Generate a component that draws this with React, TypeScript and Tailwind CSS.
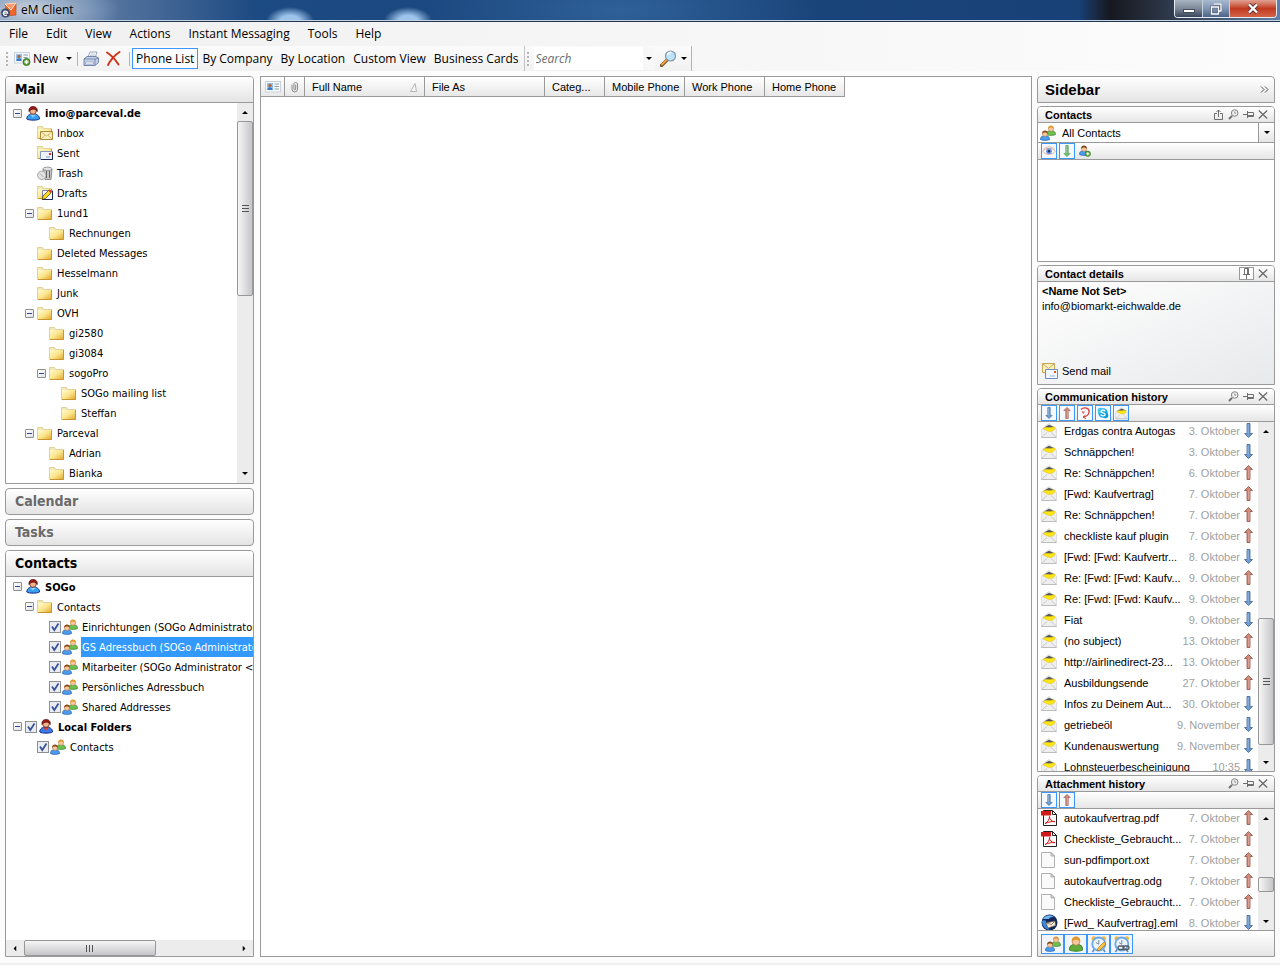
import { useState } from 'react';
import type { ReactNode } from 'react';

type IconProps = { className?: string };

/* ---------- icons ---------- */

const LogoIcon = () => (
  <svg width="16" height="16" viewBox="0 0 16 16">
    <path d="M4 2L15 1v12l-9 1z" fill="#f0672c" stroke="#b9441a" strokeWidth=".6" />
    <path d="M4 2l6 6 5-7z" fill="#ff9a6a" stroke="#fff" strokeWidth=".7" />
    <circle cx="4.500" cy="11" r="4.500" fill="#3c4a6b" />
    <path d="M2.300 11.200h4.400a2.200 2.200 0 1 0-.8 1.800" fill="none" stroke="#fff" strokeWidth="1.200" />
  </svg>
);

const CardIcon = ({ className }: IconProps) => (
  <svg width="16" height="12" viewBox="0 0 16 12" className={className}>
    <rect x=".5" y=".5" width="15" height="10.500" fill="#f7fafd" stroke="#c9d1da" />
    <rect x="2" y="2" width="6" height="7" fill="#8fc1ee" />
    <circle cx="5" cy="4.500" r="1.700" fill="#b06a3c" />
    <path d="M2.500 9c0-2 1-2.800 2.500-2.800S7.500 7 7.500 9z" fill="#3a79c4" />
    <path d="M9.500 3h4.500M9.500 5.500h4.500M9.500 8h4.500" stroke="#8d9bab" />
  </svg>
);

const NewCardIcon = () => (
  <svg width="17" height="14" viewBox="0 0 17 14">
    <rect x=".5" y=".5" width="15" height="10.500" fill="#f7fafd" stroke="#c9d1da" />
    <rect x="2" y="2" width="6" height="7" fill="#8fc1ee" />
    <circle cx="5" cy="4.500" r="1.700" fill="#b06a3c" />
    <path d="M2.500 9c0-2 1-2.800 2.500-2.800S7.500 7 7.500 9z" fill="#3a79c4" />
    <path d="M9.500 3h4.500M9.500 5.500h4" stroke="#8d9bab" />
    <circle cx="12.500" cy="10" r="3.500" fill="#5ea73f" stroke="#39791f" />
    <path d="M12.500 8v4M10.500 10h4" stroke="#fff" strokeWidth="1.400" />
  </svg>
);

const PrinterIcon = () => (
  <svg width="16" height="16" viewBox="0 0 16 16">
    <path d="M5 6l2-5h7l-2 6z" fill="#fff" stroke="#7f8fa8" strokeWidth=".8" />
    <path d="M7.500 3h4.500M7 4.700h4.500" stroke="#9fb2cf" strokeWidth=".7" />
    <path d="M1 8l3-2.500h9L15.500 7v4.500L12 14.500H1z" fill="#c3d0e8" stroke="#5b6e95" strokeWidth=".8" />
    <path d="M1 8h11l3.500-1M12 8v6" stroke="#5b6e95" strokeWidth=".7" fill="none" />
    <path d="M2.500 11h8v2h-8z" fill="#fff" stroke="#8294b8" strokeWidth=".6" />
  </svg>
);

const DeleteIcon = () => (
  <svg width="15" height="15" viewBox="0 0 15 15">
    <path d="M1 1.500c4 2.500 8 6.500 11.500 12M13.500 1C9 4 5 8 2 14" fill="none" stroke="#cf3319" strokeWidth="1.900" strokeLinecap="round" />
  </svg>
);

const LensIcon = () => (
  <svg width="17" height="17" viewBox="0 0 17 17">
    <path d="M1.500 15.500l6-6" stroke="#6d5236" strokeWidth="3.200" strokeLinecap="round" />
    <path d="M2 14.500l5-5" stroke="#f5a331" strokeWidth="1.800" strokeLinecap="round" />
    <circle cx="10.500" cy="6" r="5" fill="#bfe3fa" stroke="#8095ab" strokeWidth="1.200" />
    <path d="M7.500 5a3.300 3.300 0 0 1 3.500-2.500" fill="none" stroke="#fff" strokeWidth="1.400" />
  </svg>
);

const FolderShape = () => (
  <>
    <defs>
      <linearGradient id="folder" x1="0" y1="0" x2="1" y2="1">
        <stop offset="0" stopColor="#fffad0" />
        <stop offset=".5" stopColor="#fbe58c" />
        <stop offset="1" stopColor="#e2a52c" />
      </linearGradient>
    </defs>
    <path d="M.5 13.500v-12h5l1 2h8v10z" fill="#f2e9b4" stroke="#dfd29a" />
    <path d="M1 4h13.500v9.500H1z" fill="url(#folder)" />
    <path d="M14.500 4v9.500H1" fill="none" stroke="#c9962d" />
  </>
);

const FolderIcon = () => (
  <svg width="16" height="15" viewBox="0 0 16 15">
    <FolderShape />
  </svg>
);

const InboxIcon = () => (
  <svg width="16" height="16" viewBox="0 0 16 16">
    <FolderShape />
    <path d="M3.500 6.500h12v8h-12z" fill="#fdf0bf" stroke="#b08c3c" />
    <path d="M4 7l5.500 4L15 7M4 14l4-3.700M15 14l-4-3.700" fill="none" stroke="#c9a552" strokeWidth=".8" />
  </svg>
);

const SentIcon = () => (
  <svg width="16" height="16" viewBox="0 0 16 16">
    <FolderShape />
    <path d="M3.500 6.500h12v8h-12z" fill="#eef2fd" stroke="#8796c6" />
    <path d="M15.500 7v7.500H4" fill="none" stroke="#1d2757" />
    <path d="M12 8h2v2h-2z" fill="#e02a1c" />
    <path d="M9 12h4" stroke="#a6b3df" strokeWidth="1.500" />
  </svg>
);

const TrashIcon = () => (
  <svg width="16" height="15" viewBox="0 0 16 15">
    <path d="M6 3h9l-1 10.500H8z" fill="#c6c6c6" stroke="#777" strokeWidth=".8" />
    <path d="M9.500 5v7M12.500 5v7" stroke="#5a5a5a" strokeWidth=".9" />
    <ellipse cx="10.500" cy="2.800" rx="4.500" ry="1.700" fill="#e6e6e6" stroke="#777" strokeWidth=".7" />
    <circle cx="4.800" cy="9.300" r="4.200" fill="#e3e3e3" stroke="#909090" strokeWidth=".8" />
    <path d="M3 7.500l3.500 3.500" stroke="#a8a8a8" />
  </svg>
);

const DraftsIcon = () => (
  <svg width="16" height="16" viewBox="0 0 16 16">
    <FolderShape />
    <path d="M5.500 5.500h10v9h-10z" fill="#f4f7ff" stroke="#7484b8" />
    <path d="M15.500 6v8.500H5.500" fill="none" stroke="#1d2757" />
    <path d="M5 14.500l1-3.500 5.500-5.500 2.500 2.500L8.500 13.500z" fill="#ffd91f" stroke="#3d3300" strokeWidth=".7" />
    <path d="M11.500 5.500l2.500 2.500 1.200-1.300-2.400-2.400z" fill="#e33a20" />
  </svg>
);

const AccountIcon = ({ red = false }: { red?: boolean }) => (
  <svg width="15" height="15" viewBox="0 0 15 15">
    <path d="M.8 13c0-3.500 2.500-5 6.200-5s6.500 1.500 6.500 5c-2 1.500-11 1.500-12.700 0z" fill={red ? '#3a7be8' : '#3aa0ee'} stroke="#112a86" />
    <path d="M4 8.500l3 3 3.200-3z" fill={red ? '#e5392a' : '#8ad4ff'} />
    <circle cx="7" cy="5" r="3.300" fill="#f3b38a" stroke="#5a1810" strokeWidth=".7" />
    <path d="M3 5.500C2.600 1.500 5 .5 7 .5s4.800 1 4.200 5c-1-2-2-2.300-3.700-2.300S4 3.500 3 5.500z" fill="#a81818" stroke="#3e0808" strokeWidth=".7" />
  </svg>
);

const PersonShape = ({ hair, body, edge }: { hair: string; body: string; edge: string }) => (
  <>
    <path d="M.5 9.500c0-3 1.700-3.800 4.500-3.800s4.500.8 4.500 3.800c-1.500 1.200-7.500 1.200-9 0z" fill={body} stroke={edge} strokeWidth=".7" />
    <circle cx="5" cy="3.800" r="2.600" fill="#f6c79b" stroke="#a3683a" strokeWidth=".4" />
    <path d="M2.100 4.200C1.800 1.300 3.500.4 5 .4s3.200.9 2.900 3.800C7 2.700 6 2.500 5 2.500s-2 .2-2.900 1.700z" fill={hair} />
  </>
);

const PeopleIcon = () => (
  <svg width="16" height="16" viewBox="0 0 16 16">
    <g transform="translate(6 0)">
      <PersonShape hair="#e0982a" body="#6cc04f" edge="#34832a" />
    </g>
    <g transform="translate(0 5)">
      <PersonShape hair="#8a4a1c" body="#4d9cec" edge="#1e5fb4" />
    </g>
  </svg>
);

const PersonIcon = () => (
  <svg width="16" height="16" viewBox="0 0 10 11">
    <PersonShape hair="#e0982a" body="#62ad3a" edge="#34832a" />
  </svg>
);

const AddPersonIcon = () => (
  <svg width="12" height="12" viewBox="0 0 12 12">
    <PersonShape hair="#7c4218" body="#4d9cec" edge="#1e5fb4" />
    <circle cx="8.800" cy="8.800" r="2.700" fill="#5ea73f" stroke="#2f6f1c" strokeWidth=".6" />
    <path d="M8.800 7.200v3.200M7.200 8.800h3.200" stroke="#fff" />
  </svg>
);

const EyeIcon = () => (
  <svg width="14" height="12" viewBox="0 0 14 12">
    <path d="M.8 6.500C3 2.500 10.500 2 13.200 6.500 10.500 10.200 3.500 10.200.8 6.500z" fill="#fff" stroke="#d9a58c" strokeWidth=".9" />
    <path d="M1 4.500C4 1 10 1 13 4.500" fill="none" stroke="#e8b9a3" />
    <circle cx="7" cy="6.200" r="2.900" fill="#6f9be0" />
    <circle cx="7" cy="6.200" r="1.200" fill="#1c2f5c" />
  </svg>
);

const arrowColors = {
  blue: ['#6f9bd1', '#3d6594'],
  red: ['#d08a7c', '#96503f'],
  green: ['#6cc067', '#4c9a4a'],
};

const ArrowIcon = ({ color, up = false, small = false }: { color: keyof typeof arrowColors; up?: boolean; small?: boolean }) => (
  <svg width={small ? 8 : 9} height={small ? 12 : 15} viewBox="0 0 9 15" className={up ? 'rotate-180' : ''}>
    <path d="M3 .5h3v10h2.500l-4 4-4-4H3z" fill={arrowColors[color][0]} stroke={arrowColors[color][1]} strokeWidth=".8" />
    <path d="M4 1.500v9" stroke="#fff" strokeOpacity=".4" strokeWidth=".9" />
  </svg>
);

const MissedCallIcon = () => (
  <svg width="12" height="12" viewBox="0 0 12 12">
    <path d="M2 2.500C5-.5 11 1 10 5.500 9.500 8.500 7 9.500 4.500 10" fill="none" stroke="#dc3a34" strokeWidth="1.300" />
    <path d="M6.500 8L4 10.200 7 11.500" fill="none" stroke="#dc3a34" />
    <path d="M3 4.500l2 2M5.500 4.500l-1 1" fill="none" stroke="#e46b62" strokeWidth="1.200" />
  </svg>
);

const SkypeIcon = () => (
  <svg width="12" height="12" viewBox="0 0 12 12">
    <circle cx="6" cy="6" r="4.800" fill="#18aee9" />
    <circle cx="3.500" cy="3.500" r="2.800" fill="#45c3f2" />
    <circle cx="8.500" cy="8.500" r="2.800" fill="#0f9bd8" />
    <path d="M8.200 4.200C7 2.600 3.900 3 4 4.600c.1 1.600 4.200 1 4.200 2.900 0 1.700-3.400 1.900-4.600.2" fill="none" stroke="#fff" strokeWidth="1.300" />
  </svg>
);

const MailItemIcon = ({ size = 16 }: { size?: number }) => (
  <svg width={size} height={size} viewBox="0 0 16 16">
    <path d="M.5 6L8 .5 15.500 6v8.500H.5z" fill="#efefef" stroke="#dedede" />
    <path d="M.5 14.500l5.500-5M15.500 14.500l-5.500-5" fill="none" stroke="#c9c9c9" />
    <path d="M.5 14.500h15" stroke="#bdbdbd" />
    <path d="M3 4.500L8 1.800l5.500 2.400L9 5z" fill="#55585c" />
    <path d="M1.800 5.800C4 3.800 8 5 13.800 4c.6 2-1.300 4.500-5 4.500-2.600 0-3.600-1.600-7-2.700z" fill="#ffe716" stroke="#d8b800" strokeWidth=".5" />
  </svg>
);

const SendMailIcon = () => (
  <svg width="16" height="16" viewBox="0 0 16 16">
    <path d="M.5.5h12v9H.5z" fill="#fdf0bf" stroke="#c9a552" />
    <path d="M1 1l5.500 4.500L12 1" fill="none" stroke="#c9a552" />
    <path d="M3.500 6.500h12v9h-12z" fill="#f2f6ff" stroke="#6b8cc7" />
    <path d="M12 8h2v2h-2z" fill="#e8551c" />
    <path d="M8 13h5" stroke="#9db5de" />
  </svg>
);

const PdfIcon = () => (
  <svg width="17" height="16" viewBox="0 0 17 16">
    <path d="M2.500.5h9l4 4v11h-13z" fill="#fff" stroke="#222" />
    <path d="M11.500.5v4h4" fill="none" stroke="#222" />
    <path d="M0 1h10v4.500H0z" fill="#d21a1a" />
    <path d="M4 13.500c2.500-1 4.500-4 4.500-7 0 3 2 5 5.500 5.200-3-.4-6.500.2-10 1.800z" fill="none" stroke="#d21a1a" />
  </svg>
);

const FileIcon = () => (
  <svg width="14" height="16" viewBox="0 0 14 16">
    <path d="M.5.5h9.500l3.500 3.500v11.500H.5z" fill="#fafafa" stroke="#b0b0b0" />
    <path d="M10 .5V4h3.500z" fill="#dcdcdc" stroke="#a0a0a0" strokeWidth=".8" />
  </svg>
);

const EmlIcon = () => (
  <svg width="17" height="17" viewBox="0 0 17 17">
    <circle cx="8.500" cy="8.500" r="8" fill="#14285a" />
    <path d="M2 5C4 1 10 0 13.500 3.500c-3-1-5 0-5.500 1.500z" fill="#6fb6f2" />
    <path d="M5 9L14 7l.5 4.500L7 14z" fill="#f6e9d4" stroke="#6a6250" strokeWidth=".6" />
    <path d="M5 9l5.500 1.500L14 7" fill="none" stroke="#6a6250" strokeWidth=".7" />
    <path d="M1 7c0 4.500 2.500 8 8 9C6 13.500 4.500 11 5 7 4 6 2 6 1 7z" fill="#3c8ade" />
  </svg>
);

const ClockIcon = ({ children }: { children?: ReactNode }) => (
  <svg width="18" height="18" viewBox="0 0 18 18">
    <circle cx="3.800" cy="3.600" r="2.300" fill="#f3b545" />
    <circle cx="13.800" cy="3.600" r="2.300" fill="#f3b545" />
    <path d="M4 14.500L2.500 17M13.500 14.500L15 17" stroke="#5488c6" strokeWidth="1.500" />
    <circle cx="8.800" cy="9" r="6.500" fill="#eef6fd" stroke="#6ba9e4" strokeWidth="1.800" />
    <path d="M8.800 5v4.300L6 7.500" fill="none" stroke="#7a8a9c" />
    {children}
  </svg>
);

const ClipIcon = () => (
  <svg width="8" height="12" viewBox="0 0 8 12">
    <path d="M1 3.500v4.700a2.700 2.700 0 0 0 5.500 0V2.800a1.900 1.900 0 0 0-3.600 0V8a.9.900 0 0 0 1.800 0V3.500" fill="none" stroke="#8a8a8a" />
  </svg>
);

const ShareGlyph = () => (
  <svg width="10" height="12" viewBox="0 0 10 12">
    <path d="M3 4.500H.5v6h8v-6H6M4.500 8V1M2.500 3l2-2 2 2" fill="none" stroke="#6f6f6f" />
  </svg>
);

const SearchGlyph = () => (
  <svg width="11" height="11" viewBox="0 0 11 11">
    <circle cx="6.700" cy="4" r="3.300" fill="#ececec" stroke="#858585" />
    <path d="M6.700 2.500v1.700h1.500" fill="none" stroke="#858585" strokeWidth=".8" />
    <path d="M1 10l3-3.200" stroke="#6f6f6f" strokeWidth="1.900" />
  </svg>
);

const PinGlyph = ({ upright = false }: { upright?: boolean }) => (
  <svg width="11" height="11" viewBox="0 0 11 11" className={upright ? '-rotate-90' : ''}>
    <path d="M0 5.500h4M4.500 2v7M5 3.500h5.500v4H5M5 6.500h5.500" fill="none" stroke="#6f6f6f" />
  </svg>
);

const CloseGlyph = () => (
  <svg width="10" height="9" viewBox="0 0 10 9">
    <path d="M.8.5l8.400 8M9.200.5l-8.400 8" stroke="#666" strokeWidth="1.200" />
  </svg>
);

const Caret = ({ className = '' }: IconProps) => (
  <svg width="6" height="3" viewBox="0 0 6 3" className={className}>
    <path d="M0 0h6L3 3z" fill="#000" />
  </svg>
);

/* ---------- shared pieces ---------- */

function Grip() {
  return (
    <span className="flex flex-col gap-[2px]">
      {[0, 1, 2, 3].map((i) => (
        <span key={i} className="h-[2px] w-[2px] bg-[#b4b4b4]" />
      ))}
    </span>
  );
}

interface ScrollbarProps {
  size: number;
  before: number;
  after: number;
  grip?: boolean;
  horizontal?: boolean;
}

function Scrollbar({ size, before, after, grip = true, horizontal = false }: ScrollbarProps) {
  const arrow = 'flex shrink-0 items-center justify-center';
  return (
    <div className={`flex shrink-0 bg-[#ececec] ${horizontal ? 'h-4' : 'w-4 flex-col'}`}>
      <button aria-label="Scroll back" className={`${arrow} ${horizontal ? 'w-[18px]' : 'h-[18px]'}`}>
        <Caret className={horizontal ? 'rotate-90' : 'rotate-180'} />
      </button>
      <span style={{ flexGrow: before }} />
      <span
        className={`flex items-center justify-center gap-px rounded-[2px] border border-[#979797] from-[#f6f6f6] to-[#c6c6ca] ${
          horizontal ? 'bg-linear-to-b' : 'flex-col bg-linear-to-r'
        }`}
        style={{ flexBasis: size }}
      >
        {grip &&
          [0, 1, 2].map((i) => (
            <span key={i} className={horizontal ? 'mr-px h-[7px] w-px bg-[#555]' : 'mb-px h-px w-[7px] bg-[#555]'} />
          ))}
      </span>
      <span style={{ flexGrow: after }} />
      <button aria-label="Scroll forward" className={`${arrow} ${horizontal ? 'w-[18px]' : 'h-[18px]'}`}>
        <Caret className={horizontal ? '-rotate-90' : ''} />
      </button>
    </div>
  );
}

/* ---------- left navigation ---------- */

interface TreeItem {
  label: string;
  level: number;
  icon: ReactNode;
  open?: boolean;
  bold?: boolean;
  check?: boolean;
}

const mailTree: TreeItem[] = [
  { label: 'imo@parceval.de', level: 0, icon: <AccountIcon />, open: true, bold: true },
  { label: 'Inbox', level: 1, icon: <InboxIcon /> },
  { label: 'Sent', level: 1, icon: <SentIcon /> },
  { label: 'Trash', level: 1, icon: <TrashIcon /> },
  { label: 'Drafts', level: 1, icon: <DraftsIcon /> },
  { label: '1und1', level: 1, icon: <FolderIcon />, open: true },
  { label: 'Rechnungen', level: 2, icon: <FolderIcon /> },
  { label: 'Deleted Messages', level: 1, icon: <FolderIcon /> },
  { label: 'Hesselmann', level: 1, icon: <FolderIcon /> },
  { label: 'Junk', level: 1, icon: <FolderIcon /> },
  { label: 'OVH', level: 1, icon: <FolderIcon />, open: true },
  { label: 'gi2580', level: 2, icon: <FolderIcon /> },
  { label: 'gi3084', level: 2, icon: <FolderIcon /> },
  { label: 'sogoPro', level: 2, icon: <FolderIcon />, open: true },
  { label: 'SOGo mailing list', level: 3, icon: <FolderIcon /> },
  { label: 'Steffan', level: 3, icon: <FolderIcon /> },
  { label: 'Parceval', level: 1, icon: <FolderIcon />, open: true },
  { label: 'Adrian', level: 2, icon: <FolderIcon /> },
  { label: 'Bianka', level: 2, icon: <FolderIcon /> },
];

const contactTree: TreeItem[] = [
  { label: 'SOGo', level: 0, icon: <AccountIcon />, open: true, bold: true },
  { label: 'Contacts', level: 1, icon: <FolderIcon />, open: true },
  { label: 'Einrichtungen (SOGo Administrator', level: 2, icon: <PeopleIcon />, check: true },
  { label: 'GS Adressbuch (SOGo Administrator', level: 2, icon: <PeopleIcon />, check: true },
  { label: 'Mitarbeiter (SOGo Administrator <a', level: 2, icon: <PeopleIcon />, check: true },
  { label: 'Persönliches Adressbuch', level: 2, icon: <PeopleIcon />, check: true },
  { label: 'Shared Addresses', level: 2, icon: <PeopleIcon />, check: true },
  { label: 'Local Folders', level: 0, icon: <AccountIcon red />, open: true, bold: true, check: true },
  { label: 'Contacts', level: 1, icon: <PeopleIcon />, check: true },
];

const indents = ['pl-[7px]', 'pl-[19px]', 'pl-[31px]', 'pl-[43px]'];

function Expander() {
  return (
    <button
      aria-label="Collapse"
      className="flex h-[9px] w-[9px] items-center justify-center rounded-[1px] border border-[#8e8e8e] bg-linear-to-br from-white to-[#e2e2e2]"
    >
      <span className="h-px w-[5px] bg-[#31479b]" />
    </button>
  );
}

function Tree({ items, selected }: { items: TreeItem[]; selected?: number }) {
  return (
    <ul className="min-w-0 flex-1 overflow-hidden">
      {items.map((item, i) => {
        const id = `folder-${item.level}-${i}`;
        return (
          <li key={i} className={`flex h-5 items-center whitespace-nowrap ${indents[item.level]}`}>
            <span className="mr-[3px] w-[9px] shrink-0">{item.open && <Expander />}</span>
            {item.check && (
              <span className="relative mr-px h-3 w-3 shrink-0">
                <input
                  id={id}
                  type="checkbox"
                  defaultChecked
                  className="peer block h-3 w-3 appearance-none border border-[#8e8f8f] bg-[#e9ecf0]"
                />
                <svg viewBox="0 0 12 12" className="pointer-events-none invisible absolute inset-0 peer-checked:visible">
                  <path d="M3 5.500l2.300 3.500L9.500 2.500" fill="none" stroke="#3d5397" strokeWidth="1.800" />
                </svg>
              </span>
            )}
            <span className="flex w-4 shrink-0 justify-center">{item.icon}</span>
            <label
              htmlFor={item.check ? id : undefined}
              className={`ml-[3px] h-5 flex-1 px-px leading-[22px] ${item.bold ? 'font-bold' : ''} ${
                selected === i ? 'bg-[#3399ff] text-white' : ''
              }`}
            >
              {item.label}
            </label>
          </li>
        );
      })}
    </ul>
  );
}

const navHeader = 'w-full shrink-0 bg-linear-to-b from-white to-[#e4e4e4] px-[9px] text-left text-[14px] font-bold';

function LeftNav() {
  return (
    <nav className="flex w-[249px] shrink-0 flex-col gap-1 font-['DejaVu_Sans_Condensed','DejaVu_Sans',sans-serif] text-[11px]">
      <section className="flex min-h-0 flex-1 basis-0 flex-col rounded-t-[4px] border border-[#9a9a9a] bg-white">
        <button className={`${navHeader} h-[26px] rounded-t-[3px] border-b border-[#9a9a9a]`}>Mail</button>
        <div className="flex min-h-0 flex-1">
          <Tree items={mailTree} />
          <Scrollbar size={175} before={0} after={1} />
        </div>
      </section>
      <button className={`${navHeader} h-[27px] rounded-[4px] border border-[#9a9a9a] text-[#6a6a6a]`}>Calendar</button>
      <button className={`${navHeader} h-[27px] rounded-[4px] border border-[#9a9a9a] text-[#6a6a6a]`}>Tasks</button>
      <section className="flex min-h-0 flex-1 basis-0 flex-col rounded-t-[4px] border border-[#9a9a9a] bg-white">
        <button className={`${navHeader} h-[26px] rounded-t-[3px] border-b border-[#9a9a9a]`}>Contacts</button>
        <div className="flex min-h-0 flex-1">
          <Tree items={contactTree} selected={3} />
        </div>
        <Scrollbar size={132} before={0} after={1} horizontal />
      </section>
    </nav>
  );
}

/* ---------- contact list ---------- */

const columns = [
  { title: 'Full Name', width: 'w-[120px]', sorted: true },
  { title: 'File As', width: 'w-[120px]' },
  { title: 'Categ...', width: 'w-[60px]' },
  { title: 'Mobile Phone', width: 'w-[80px]' },
  { title: 'Work Phone', width: 'w-[80px]' },
  { title: 'Home Phone', width: 'w-[80px]' },
];

function ContactList() {
  const cell = 'h-5 border-r border-b border-[#9a9a9a] bg-linear-to-b from-white to-[#e8e8e8] p-0 font-normal';
  return (
    <main className="min-w-0 flex-1 overflow-hidden border border-[#9a9a9a] bg-white">
      <table className="w-[584px] table-fixed border-separate border-spacing-0 text-left text-[11px]">
        <thead>
          <tr>
            <th className={`${cell} w-6`}>
              <CardIcon className="mx-auto" />
            </th>
            <th className={`${cell} w-5`}>
              <span className="flex justify-center">
                <ClipIcon />
              </span>
            </th>
            {columns.map((c) => (
              <th key={c.title} className={`${cell} ${c.width}`}>
                <span className="flex items-center justify-between pt-px pr-[6px] pl-[7px] whitespace-nowrap">
                  {c.title}
                  {c.sorted && (
                    <svg width="8" height="9" viewBox="0 0 8 9">
                      <path d="M.5 8.500L5 .5l1.500 8z" fill="#f6f6f6" stroke="#b5b5b5" />
                    </svg>
                  )}
                </span>
              </th>
            ))}
          </tr>
        </thead>
        <tbody />
      </table>
    </main>
  );
}

/* ---------- sidebar ---------- */

interface PanelProps {
  title: string;
  className?: string;
  tools: ReactNode;
  children: ReactNode;
}

function Panel({ title, className = '', tools, children }: PanelProps) {
  return (
    <section className={`flex flex-col rounded-t-[4px] border border-[#9a9a9a] bg-white ${className}`}>
      <header className="flex h-4 shrink-0 items-center justify-between rounded-t-[3px] border-b border-[#9a9a9a] bg-linear-to-b from-white to-[#e6e6e6] pr-[6px] pl-[7px]">
        <h2 className="pt-px font-bold">{title}</h2>
        <div className="flex items-center gap-1">{tools}</div>
      </header>
      {children}
    </section>
  );
}

function Tool({ label, children, boxed = false }: { label: string; children: ReactNode; boxed?: boolean }) {
  return (
    <button aria-label={label} className={boxed ? 'border border-[#9a9a9a] bg-white px-px' : ''}>
      {children}
    </button>
  );
}

function FilterButton({ label, children, active = true }: { label: string; children: ReactNode; active?: boolean }) {
  return (
    <button
      aria-label={label}
      className={`flex h-4 w-4 items-center justify-center border ${active ? 'border-[#3b97fb] bg-[#f4f9ff]' : 'border-transparent'}`}
    >
      {children}
    </button>
  );
}

function FilterBar({ children }: { children: ReactNode }) {
  return (
    <div className="flex h-[17px] shrink-0 gap-[2px] border-b border-[#9a9a9a] bg-linear-to-b from-white to-[#e6e6e6] pl-[3px]">
      {children}
    </div>
  );
}

interface HistoryItem {
  title: string;
  date: string;
  out?: boolean;
  icon?: ReactNode;
}

const messages: HistoryItem[] = [
  { title: 'Erdgas contra Autogas', date: '3. Oktober' },
  { title: 'Schnäppchen!', date: '3. Oktober' },
  { title: 'Re: Schnäppchen!', date: '6. Oktober', out: true },
  { title: '[Fwd: Kaufvertrag]', date: '7. Oktober', out: true },
  { title: 'Re: Schnäppchen!', date: '7. Oktober', out: true },
  { title: 'checkliste kauf plugin', date: '7. Oktober', out: true },
  { title: '[Fwd: [Fwd: Kaufvertr...', date: '8. Oktober' },
  { title: 'Re: [Fwd: [Fwd: Kaufv...', date: '9. Oktober', out: true },
  { title: 'Re: [Fwd: [Fwd: Kaufv...', date: '9. Oktober' },
  { title: 'Fiat', date: '9. Oktober' },
  { title: '(no subject)', date: '13. Oktober', out: true },
  { title: 'http://airlinedirect-23...', date: '13. Oktober', out: true },
  { title: 'Ausbildungsende', date: '27. Oktober', out: true },
  { title: 'Infos zu Deinem Aut...', date: '30. Oktober' },
  { title: 'getriebeöl', date: '9. November' },
  { title: 'Kundenauswertung', date: '9. November' },
  { title: 'Lohnsteuerbescheinigung', date: '10:35' },
];

const attachments: HistoryItem[] = [
  { title: 'autokaufvertrag.pdf', date: '7. Oktober', out: true, icon: <PdfIcon /> },
  { title: 'Checkliste_Gebraucht...', date: '7. Oktober', out: true, icon: <PdfIcon /> },
  { title: 'sun-pdfimport.oxt', date: '7. Oktober', out: true, icon: <FileIcon /> },
  { title: 'autokaufvertrag.odg', date: '7. Oktober', out: true, icon: <FileIcon /> },
  { title: 'Checkliste_Gebraucht...', date: '7. Oktober', out: true, icon: <FileIcon /> },
  { title: '[Fwd_ Kaufvertrag].eml', date: '8. Oktober', icon: <EmlIcon /> },
];

function History({ items }: { items: HistoryItem[] }) {
  return (
    <div className="min-w-0 flex-1 overflow-hidden">
      <ul className="-mt-[2px]">
        {items.map((item, i) => (
          <li key={i} className="flex h-[21px] items-center pr-[5px] pl-[3px] whitespace-nowrap">
            <span className="mr-[6px] flex w-[17px] shrink-0">{item.icon ?? <MailItemIcon />}</span>
            <span className="flex-1 pt-px">{item.title}</span>
            <span className="mr-1 pt-px text-[#a0a0a0]">{item.date}</span>
            <ArrowIcon color={item.out ? 'red' : 'blue'} up={item.out} />
          </li>
        ))}
      </ul>
    </div>
  );
}

function Sidebar() {
  const [group, setGroup] = useState('All Contacts');

  const tools = (
    <>
      <Tool label="Search">
        <SearchGlyph />
      </Tool>
      <Tool label="Pin">
        <PinGlyph />
      </Tool>
      <Tool label="Close">
        <CloseGlyph />
      </Tool>
    </>
  );

  return (
    <aside className="flex w-[238px] shrink-0 flex-col gap-[3px] text-[11px]">
      <header className="flex h-[27px] shrink-0 items-center justify-between rounded-t-[4px] border border-[#9a9a9a] bg-linear-to-b from-white to-[#e4e4e4] pr-[5px] pl-[7px]">
        <h1 className="pt-px text-[15px] font-bold">Sidebar</h1>
        <button aria-label="Collapse sidebar">
          <svg width="9" height="7" viewBox="0 0 9 7">
            <path d="M1 .5l3 3-3 3M5 .5l3 3-3 3" fill="none" stroke="#555" />
          </svg>
        </button>
      </header>

      <Panel
        title="Contacts"
        className="h-[156px] shrink-0"
        tools={
          <>
            <Tool label="Detach">
              <ShareGlyph />
            </Tool>
            {tools}
          </>
        }
      >
        <div className="flex h-5 shrink-0 items-center border-b border-[#9a9a9a]">
          <span className="mr-[6px] ml-[2px]">
            <PeopleIcon />
          </span>
          <select
            aria-label="Contact group"
            value={group}
            onChange={(e) => setGroup(e.target.value)}
            className="min-w-0 flex-1 appearance-none bg-transparent p-0 pt-px outline-none"
          >
            <option>All Contacts</option>
          </select>
          <span className="pointer-events-none flex h-full w-4 items-center justify-center border-l border-[#9a9a9a] bg-linear-to-b from-white to-[#e6e6e6]">
            <Caret />
          </span>
        </div>
        <FilterBar>
          <FilterButton label="Show visible">
            <EyeIcon />
          </FilterButton>
          <FilterButton label="Sort">
            <ArrowIcon color="green" small />
          </FilterButton>
          <FilterButton label="Add contact" active={false}>
            <AddPersonIcon />
          </FilterButton>
        </FilterBar>
      </Panel>

      <Panel
        title="Contact details"
        className="h-[120px] shrink-0"
        tools={
          <>
            <Tool label="Pin" boxed>
              <PinGlyph upright />
            </Tool>
            <Tool label="Close">
              <CloseGlyph />
            </Tool>
          </>
        }
      >
        <div className="flex flex-1 flex-col justify-between bg-linear-to-br from-white to-[#e8e9eb] px-1 pt-[2px] pb-[5px]">
          <div className="leading-[15px]">
            <p className="font-bold">&lt;Name Not Set&gt;</p>
            <p>info@biomarkt-eichwalde.de</p>
          </div>
          <button className="flex items-center gap-1 self-start">
            <SendMailIcon />
            Send mail
          </button>
        </div>
      </Panel>

      <Panel title="Communication history" className="min-h-0 flex-1" tools={tools}>
        <FilterBar>
          <FilterButton label="Incoming">
            <ArrowIcon color="blue" small />
          </FilterButton>
          <FilterButton label="Outgoing">
            <ArrowIcon color="red" up small />
          </FilterButton>
          <FilterButton label="Calls">
            <MissedCallIcon />
          </FilterButton>
          <FilterButton label="Skype">
            <SkypeIcon />
          </FilterButton>
          <FilterButton label="Mail">
            <MailItemIcon size={13} />
          </FilterButton>
        </FilterBar>
        <div className="flex min-h-0 flex-1">
          <History items={messages} />
          <Scrollbar size={127} before={178} after={8} />
        </div>
      </Panel>

      <Panel title="Attachment history" className="h-[182px] shrink-0" tools={tools}>
        <FilterBar>
          <FilterButton label="Incoming">
            <ArrowIcon color="blue" small />
          </FilterButton>
          <FilterButton label="Outgoing">
            <ArrowIcon color="red" up small />
          </FilterButton>
        </FilterBar>
        <div className="flex min-h-0 flex-1">
          <History items={attachments} />
          <Scrollbar size={15} before={49} after={20} grip={false} />
        </div>
        <footer className="flex h-[26px] shrink-0 items-center border-t border-[#9a9a9a] bg-linear-to-b from-white to-[#e6e6e6] pl-[3px]">
          {[
            { label: 'Contacts', icon: <PeopleIcon /> },
            { label: 'Contact details', icon: <PersonIcon /> },
            {
              label: 'Communication history',
              icon: (
                <ClockIcon>
                  <path d="M7 16l1-3 6-6 2 2-6 6z" fill="#f8c544" stroke="#a3731a" strokeWidth=".7" />
                </ClockIcon>
              ),
            },
            {
              label: 'Attachment history',
              icon: (
                <ClockIcon>
                  <rect x="5" y="11" width="6" height="3.500" rx="1.700" fill="none" stroke="#4e5966" strokeWidth="1.400" />
                  <rect x="10" y="11" width="6" height="3.500" rx="1.700" fill="none" stroke="#4e5966" strokeWidth="1.400" />
                </ClockIcon>
              ),
            },
          ].map((b) => (
            <button
              key={b.label}
              aria-label={b.label}
              className="flex h-5 w-[23px] items-center justify-center border border-[#3b97fb] bg-[#f1f4f8]"
            >
              {b.icon}
            </button>
          ))}
        </footer>
      </Panel>
    </aside>
  );
}

/* ---------- window chrome ---------- */

function TitleBar() {
  return (
    <div className="flex h-[22px] shrink-0 items-start justify-between border-b border-[#23354f] bg-linear-to-r from-[#7f95b4] via-[#1c4a82] via-20% to-[#173f74]">
      <div className="flex h-[21px] flex-1 items-center gap-1 border-b border-[#c3d3e6] bg-[radial-gradient(ellipse_90px_34px_at_30px_10px,#c9d2df_0%,#8fa6c3_50%,transparent_100%),radial-gradient(ellipse_24px_14px_at_290px_21px,#9cc3ea_40%,transparent_100%),radial-gradient(ellipse_24px_14px_at_408px_21px,#9cc3ea_40%,transparent_100%),radial-gradient(ellipse_200px_60px_at_620px_10px,#2f6198,transparent)] pl-px">
        <LogoIcon />
        <span>eM Client</span>
      </div>
      <div className="flex h-[21px] w-[200px] items-start justify-end border-b border-[#c3d3e6] bg-linear-to-r from-[#173f74] via-[#16181f] via-15% to-[#5f7fa8] pr-[3px]">
        <div className="flex h-[18px] overflow-hidden rounded-b-[4px] border border-t-0 border-[#e6ecf4]">
          <button aria-label="Minimize" className="flex w-7 items-end justify-center border-r border-[#c8d2df] bg-linear-to-b from-[#a9b4c2] via-[#7d8998] to-[#39465a] pb-1">
            <svg width="12" height="4" viewBox="0 0 12 4">
              <rect x=".5" y=".5" width="11" height="3" fill="#fff" stroke="#444c5c" />
            </svg>
          </button>
          <button aria-label="Restore" className="flex w-[27px] items-center justify-center border-r border-[#c8d2df] bg-linear-to-b from-[#a9bad0] via-[#7f95b4] to-[#4a6588]">
            <svg width="12" height="12" viewBox="0 0 12 12">
              <path d="M4 1h7v7H8.500M1.500 4h7v7h-7z" fill="none" stroke="#44506a" strokeWidth="2.600" />
              <path d="M4 1h7v7H8.500M1.500 4h7v7h-7z" fill="none" stroke="#fff" strokeWidth="1.400" />
            </svg>
          </button>
          <button aria-label="Close" className="flex w-[46px] items-center justify-center bg-linear-to-b from-[#e0a193] via-[#c1391d] to-[#d4634a]">
            <svg width="12" height="11" viewBox="0 0 12 11">
              <path d="M2 1.500l8 8M10 1.500l-8 8" stroke="#5a3434" strokeWidth="4" />
              <path d="M2 1.500l8 8M10 1.500l-8 8" stroke="#fff" strokeWidth="2.400" />
            </svg>
          </button>
        </div>
      </div>
    </div>
  );
}

const menus = ['File', 'Edit', 'View', 'Actions', 'Instant Messaging', 'Tools', 'Help'];
const views = ['Phone List', 'By Company', 'By Location', 'Custom View', 'Business Cards'];

function Toolbar() {
  const [view, setView] = useState('Phone List');
  const [query, setQuery] = useState('');

  return (
    <div className="flex h-[25px] shrink-0 items-center">
      <div className="flex h-full items-center border-r border-[#c4c4c4] bg-linear-to-b from-[#fbfbfb] to-[#f1f1f1] pr-px pl-[6px]">
        <Grip />
        <button className="ml-[6px] flex items-center gap-[2px]">
          <NewCardIcon />
          New
          <Caret className="ml-[6px]" />
        </button>
        <span className="mx-[5px] h-[14px] w-px bg-[#b4b4b4]" />
        <button aria-label="Print">
          <PrinterIcon />
        </button>
        <button aria-label="Delete" className="ml-[7px]">
          <DeleteIcon />
        </button>
        <span className="mr-[2px] ml-2 h-[14px] w-px bg-[#b4b4b4]" />
        {views.map((v) => (
          <button
            key={v}
            onClick={() => setView(v)}
            className={`h-[21px] border px-[3px] whitespace-nowrap ${view === v ? 'border-[#3b97fb] bg-[#fafcff]' : 'border-transparent'}`}
          >
            {v}
          </button>
        ))}
      </div>
      <div className="flex h-full items-center border-r border-[#b4b4b4] bg-linear-to-b from-[#fbfbfb] to-[#f1f1f1] pr-1 pl-[2px]">
        <Grip />
        <div className="ml-[5px] flex h-[23px] w-[121px] items-center bg-white">
          <input
            aria-label="Search"
            placeholder="Search"
            value={query}
            onChange={(e) => setQuery(e.target.value)}
            className="min-w-0 flex-1 pl-[2px] italic outline-none placeholder:text-[#6d6d6d]"
          />
          <button aria-label="Search options" className="flex h-full w-3 items-center justify-center bg-[#f7f7f7]">
            <Caret />
          </button>
        </div>
        <button aria-label="Find" className="ml-[5px] flex items-center gap-1">
          <LensIcon />
          <Caret />
        </button>
      </div>
    </div>
  );
}

export default function App() {
  return (
    <div className="flex h-screen flex-col overflow-hidden bg-[#fcfcfc] font-['Liberation_Sans',Arial,sans-serif] text-black">
      <div className="shrink-0 bg-linear-to-r from-[#f0f0f0] to-[#fcfcfc] font-['Open_Sans','Noto_Sans',sans-serif] text-[12px]">
        <TitleBar />
        <div className="flex h-6 items-center">
          {menus.map((m) => (
            <button key={m} className="px-[9px] whitespace-nowrap">
              {m}
            </button>
          ))}
        </div>
        <Toolbar />
      </div>
      <div className="flex min-h-0 flex-1 px-[5px] pt-[5px] pb-[6px]">
        <LeftNav />
        <div className="flex min-w-0 flex-1 pr-[5px] pl-[6px]">
          <ContactList />
        </div>
        <Sidebar />
      </div>
      <div className="h-[2px] shrink-0 bg-[#f0f0f0]" />
    </div>
  );
}
